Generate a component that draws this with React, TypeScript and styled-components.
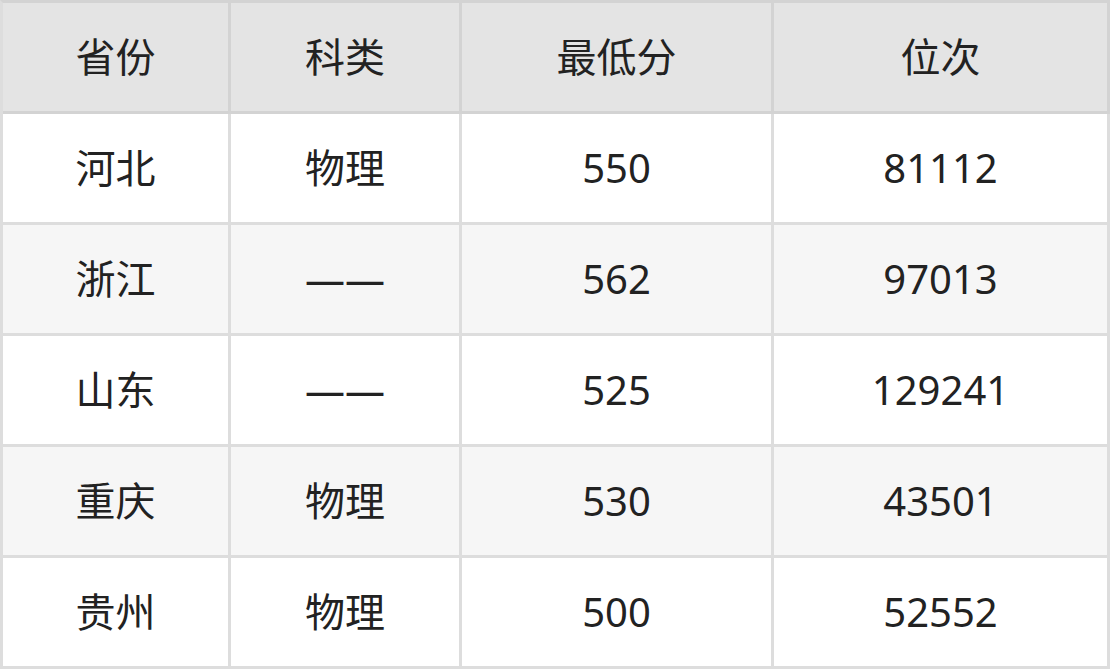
import React from "react";
import styled, { createGlobalStyle } from "styled-components";

const GlobalStyle = createGlobalStyle`
  html, body {
    margin: 0;
    padding: 0;
    background: #fff;
  }
  body {
    font-family: "Noto Sans", "Noto Sans CJK SC", sans-serif;
  }
`;

interface RowType {
  province: string;
  subject: string;
  score: string;
  rank: string;
}

const heads = ["省份", "科类", "最低分", "位次"];

const rows: RowType[] = [
  { province: "河北", subject: "物理", score: "550", rank: "81112" },
  { province: "浙江", subject: "——", score: "562", rank: "97013" },
  { province: "山东", subject: "——", score: "525", rank: "129241" },
  { province: "重庆", subject: "物理", score: "530", rank: "43501" },
  { province: "贵州", subject: "物理", score: "500", rank: "52552" },
];

const Grid = styled.div`
  width: 1110px;
  box-sizing: border-box;
  display: grid;
  grid-template-columns: 228px 231px 312px 336px;
  grid-auto-rows: 111px;
  border-left: 3px solid #dddddd;
  border-top: 3px solid #d3d3d3;
  color: #222;
  font-size: 40px;
  line-height: 1;
`;

const Cell = styled.div<{ $head?: boolean; $striped?: boolean }>`
  box-sizing: border-box;
  display: flex;
  align-items: center;
  justify-content: center;
  border-right: 3px solid ${(p) => (p.$head ? "#d3d3d3" : "#dddddd")};
  border-bottom: 3px solid ${(p) => (p.$head ? "#d3d3d3" : "#dddddd")};
  background: ${(p) => (p.$head ? "#e4e4e4" : p.$striped ? "#f6f6f6" : "#fff")};
`;

const App = () => {
  return (
    <>
      <GlobalStyle />
      <Grid>
        {heads.map((h) => (
          <Cell key={h} $head>
            {h}
          </Cell>
        ))}
        {rows.map((r, i) => (
          <React.Fragment key={r.province}>
            <Cell $striped={i % 2 === 1}>{r.province}</Cell>
            <Cell $striped={i % 2 === 1}>{r.subject}</Cell>
            <Cell $striped={i % 2 === 1}>{r.score}</Cell>
            <Cell $striped={i % 2 === 1}>{r.rank}</Cell>
          </React.Fragment>
        ))}
      </Grid>
    </>
  );
};

export default App;
